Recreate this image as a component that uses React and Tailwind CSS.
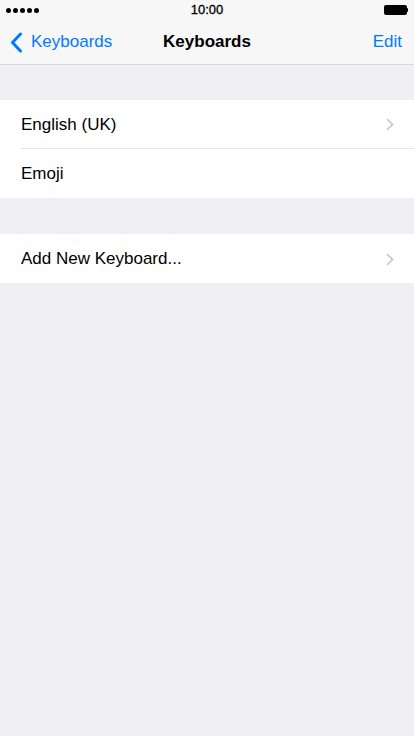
import React from "react";

const font = { fontFamily: '"Liberation Sans", Arial, sans-serif' };

const Chevron = () => (
  <svg width="8" height="13" viewBox="0 0 8 13" className="shrink-0">
    <path d="M1 1l5.5 5.5L1 12" fill="none" stroke="#c7c7cc" strokeWidth="1.7" />
  </svg>
);

const Row = ({ label, chevron, last }) => (
  <div className="flex h-[49px] items-stretch pl-[21px]">
    <div
      className={`flex flex-1 items-center justify-between pr-[20px] pt-[1px] ${
        last ? "" : "border-b border-[#e5e5ea]"
      }`}
    >
      <span className="text-[17px] text-black">{label}</span>
      {chevron && <Chevron />}
    </div>
  </div>
);

export default function App() {
  return (
    <div className="flex min-h-[736px] flex-col bg-[#efeff4]" style={font}>
      <div className="bg-[#f7f7f7] border-b border-[#d8d8dc]">
        <div className="relative flex h-[20px] items-center px-[6px]">
          <div className="flex gap-[2px]">
            {[0, 1, 2, 3, 4].map((i) => (
              <span key={i} className="h-[5px] w-[5px] rounded-full bg-black" />
            ))}
          </div>
          <span className="absolute left-1/2 -translate-x-1/2 text-[13px] text-black [-webkit-text-stroke:0.3px_black]">
            10:00
          </span>
          <div className="ml-auto flex items-center">
            <div className="h-[10px] w-[23px] rounded-[2px] bg-black" />
            <div className="h-[4px] w-[1.5px] rounded-r bg-black" />
          </div>
        </div>
        <div className="relative flex h-[44px] items-center px-[10px]">
          <div className="flex items-center gap-[8px] text-[#007aff]">
            <svg width="13" height="21" viewBox="0 0 13 21">
              <path
                d="M10.5 2L2.5 10.5l8 8.5"
                fill="none"
                stroke="#007aff"
                strokeWidth="3"
                strokeLinecap="round"
                strokeLinejoin="round"
              />
            </svg>
            <span className="text-[17px]">Keyboards</span>
          </div>
          <span className="absolute left-1/2 -translate-x-1/2 text-[17px] font-semibold text-black">
            Keyboards
          </span>
          <span className="ml-auto pr-[2px] text-[17px] text-[#007aff]">Edit</span>
        </div>
      </div>

      <div className="mt-[35px] bg-white">
        <Row label="English (UK)" chevron />
        <Row label="Emoji" last />
      </div>

      <div className="mt-[36px] bg-white">
        <Row label="Add New Keyboard..." chevron last />
      </div>
    </div>
  );
}
